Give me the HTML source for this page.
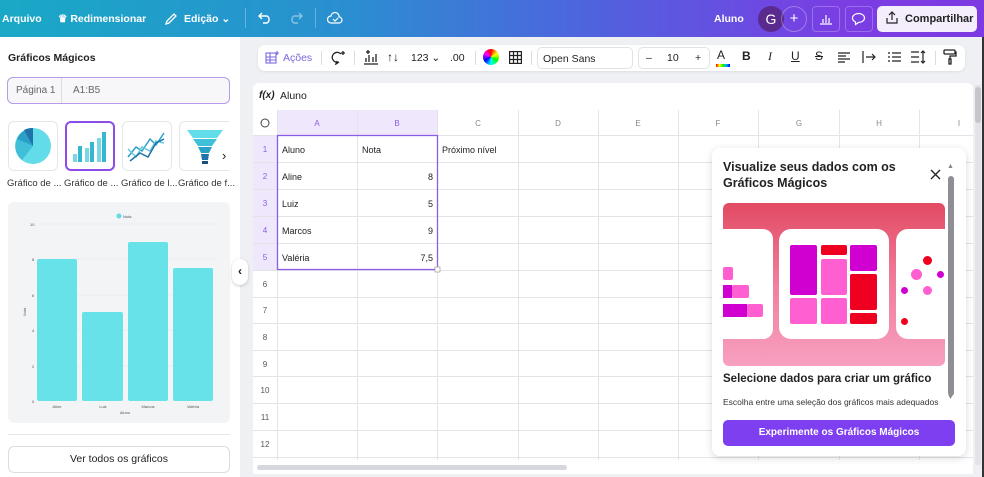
<!DOCTYPE html>
<html><head><meta charset="utf-8"><style>
*{box-sizing:border-box;margin:0;padding:0}
body{width:984px;height:477px;overflow:hidden;font-family:"Liberation Sans",sans-serif;background:#eef0f4;position:relative;font-size:11px;color:#222}
.a{position:absolute}
#top{left:0;top:0;width:984px;height:37px;background:linear-gradient(90deg,#19a9c6 0%,#2a8fd0 35%,#4f63de 60%,#7a3ee3 85%,#7d3ae2 100%);color:#fff;font-weight:bold;font-size:10.5px}
#top .a{top:13px}
#left{left:0;top:37px;width:240px;height:440px;background:#fff}
</style></head><body>
<div id="top" class="a">
 <div class="a" style="left:2px">Arquivo</div>
 <div class="a" style="left:58px">♛ Redimensionar</div>
 <svg class="a" style="left:164px;top:12px" width="14" height="14" viewBox="0 0 14 14" fill="none" stroke="#fff" stroke-width="1.3"><path d="M2 12l1-3 7-7 2 2-7 7z"/></svg>
 <div class="a" style="left:184px">Edição ⌄</div>
 <div class="a" style="left:245px;top:8px;width:1px;height:20px;background:rgba(255,255,255,.3)"></div>
 <svg class="a" style="left:258px;top:12px" width="14" height="12" viewBox="0 0 14 12" fill="none" stroke="#fff" stroke-width="1.4"><path d="M4 1L1 4l3 3M1 4h8a4 4 0 010 7H5"/></svg>
 <svg class="a" style="left:289px;top:12px" width="14" height="12" viewBox="0 0 14 12" fill="none" stroke="rgba(255,255,255,.45)" stroke-width="1.4"><path d="M10 1l3 3-3 3M13 4H5a4 4 0 000 7h4"/></svg>
 <div class="a" style="left:315px;top:8px;width:1px;height:20px;background:rgba(255,255,255,.3)"></div>
 <svg class="a" style="left:327px;top:12px" width="16" height="12" viewBox="0 0 16 12" fill="none" stroke="#fff" stroke-width="1.2"><path d="M4 11h8a3 3 0 000-6 4 4 0 00-8-1A3.5 3.5 0 004 11z M6 7l2 2 3-3"/></svg>
 <div class="a" style="left:714px">Aluno</div>
 <div class="a" style="left:758px;top:6px;width:26px;height:26px;border-radius:13px;background:#5a2a8f;color:#fff;font-weight:normal;font-size:14px;text-align:center;line-height:26px">G</div>
 <div class="a" style="left:781px;top:6px;width:26px;height:26px;border-radius:13px;border:1px solid rgba(255,255,255,.3);text-align:center;line-height:24px;font-size:15px;font-weight:normal">+</div>
 <div class="a" style="left:812px;top:6px;width:28px;height:26px;border-radius:4px;border:1px solid rgba(255,255,255,.25)"></div>
 <svg class="a" style="left:819px;top:13px" width="14" height="12" viewBox="0 0 14 12" stroke="#fff" stroke-width="1.2"><path d="M1 11h12M4 10V6M7 10V2M10 10V5"/></svg>
 <div class="a" style="left:845px;top:6px;width:28px;height:26px;border-radius:4px;border:1px solid rgba(255,255,255,.25)"></div>
 <svg class="a" style="left:851px;top:12px" width="15" height="14" viewBox="0 0 15 14" fill="none" stroke="#fff" stroke-width="1.2"><path d="M7.5 1.5c3.3 0 6 2 6 4.5s-2.7 4.5-6 4.5l-3 2v-2.5c-1.8-.8-3-2.3-3-4 0-2.5 2.7-4.5 6-4.5z"/></svg>
 <div class="a" style="left:877px;top:6px;width:100px;height:26px;border-radius:5px;background:#f4eefc;color:#222;font-size:11px;line-height:26px;padding-left:28px">Compartilhar</div>
 <svg class="a" style="left:885px;top:11px" width="14" height="14" viewBox="0 0 14 14" fill="none" stroke="#222" stroke-width="1.2"><path d="M7 9V1M4 4l3-3 3 3M2 7v5h10V7"/></svg>
</div>
<div id="left" class="a">
 <div class="a" style="left:8px;top:15px;font-weight:bold;font-size:10.5px">Gráficos Mágicos</div>
 <div class="a" style="left:7px;top:40px;width:223px;height:27px;border:1px solid #b79ae8;border-radius:6px;background:#f7f7f9"></div>
 <div class="a" style="left:16px;top:48px;color:#666;font-size:10px">Página 1</div>
 <div class="a" style="left:61px;top:41px;width:1px;height:25px;background:#ddd"></div>
 <div class="a" style="left:73px;top:48px;color:#666;font-size:10px">A1:B5</div>
 <div class="a" style="left:8px;top:84px;width:50px;height:50px;border:1px solid #e6e6ea;border-radius:6px"></div>
 <svg class="a" style="left:14px;top:90px" width="38" height="38" viewBox="0 0 38 38"><circle cx="19" cy="19" r="18" fill="#62dce8"/><path d="M19 19L19 1A18 18 0 0 0 3 12z" fill="#2aa0c8"/><path d="M19 19L3 12A18 18 0 0 0 8 33z" fill="#3fbfd8"/><path d="M19 19L19 1A18 18 0 0 0 10 3z" fill="#2073a8"/></svg>
 <div class="a" style="left:65px;top:84px;width:50px;height:50px;border:2px solid #8b4ce8;border-radius:6px"></div>
 <svg class="a" style="left:72px;top:93px" width="36" height="34" viewBox="0 0 36 34" fill="#35b7d0"><rect x="1" y="24" width="4" height="8" fill="#7ad8e6"/><rect x="6" y="16" width="4" height="16"/><rect x="13" y="18" width="4" height="14" fill="#7ad8e6"/><rect x="18" y="12" width="4" height="20"/><rect x="25" y="8" width="4" height="24" fill="#7ad8e6"/><rect x="30" y="2" width="4" height="30"/></svg>
 <div class="a" style="left:122px;top:84px;width:50px;height:50px;border:1px solid #e6e6ea;border-radius:6px"></div>
 <svg class="a" style="left:126px;top:88px" width="42" height="42" viewBox="0 0 42 42" fill="none" stroke-width="1.5"><path d="M2 32l8-10 6 4 8-12 6 6 8-12" stroke="#2aa0c8"/><path d="M2 24l8 8 6-10 8 4 6-10 8 2" stroke="#62c8e0"/><path d="M4 36l10-8 8 4 8-14 8-4" stroke="#2073a8"/></svg>
 <div class="a" style="left:179px;top:84px;width:50px;height:50px;border:1px solid #e6e6ea;border-radius:6px 0 0 6px;border-right:none"></div>
 <svg class="a" style="left:186px;top:91px" width="38" height="38" viewBox="0 0 38 38"><path d="M1 2h36l-6 8H7z" fill="#62dce8"/><path d="M7 11h24l-5 7H12z" fill="#3fbfd8"/><path d="M12 19h14l-3 6h-8z" fill="#2aa0c8"/><path d="M15 26h8l-1 6h-6z" fill="#2073a8"/><rect x="16" y="33" width="6" height="3" fill="#1a4d80"/></svg>
 <div class="a" style="left:222px;top:111px;font-size:13px;color:#222">›</div>
 <div class="a" style="left:7px;top:141px;font-size:9.5px;color:#333">Gráfico de ...</div>
 <div class="a" style="left:64px;top:141px;font-size:9.5px;color:#333">Gráfico de ...</div>
 <div class="a" style="left:121px;top:141px;font-size:9.5px;color:#333">Gráfico de l...</div>
 <div class="a" style="left:178px;top:141px;font-size:9.5px;color:#333;white-space:nowrap">Gráfico de f...</div>
 <div class="a" style="left:8px;top:165px;width:222px;height:221px;background:#f3f4f6;border-radius:6px"></div>
 <svg class="a" style="left:8px;top:165px" width="222" height="221" viewBox="0 0 222 221" font-family="Liberation Sans" font-size="4">
  <circle cx="111" cy="14" r="2.5" fill="#62dce8"/><text x="115" y="16" fill="#555">Nota</text>
  <g stroke="#e2e4e8" stroke-width=".6"><line x1="32" y1="22" x2="206" y2="22"/><line x1="32" y1="57" x2="206" y2="57"/><line x1="32" y1="93" x2="206" y2="93"/><line x1="32" y1="128" x2="206" y2="128"/><line x1="32" y1="164" x2="206" y2="164"/></g>
  <g fill="#555"><text x="22" y="24">10</text><text x="24" y="59">8</text><text x="24" y="95">6</text><text x="24" y="130">4</text><text x="24" y="166">2</text><text x="24" y="201">0</text></g>
  <g fill="#67e2e8"><rect x="29" y="57" width="40" height="142" rx="2"/><rect x="74" y="110" width="41" height="89" rx="2"/><rect x="120" y="40" width="40" height="159" rx="2"/><rect x="165" y="66" width="40" height="133" rx="2"/></g>
  <g fill="#555" text-anchor="middle"><text x="49" y="206">Aline</text><text x="95" y="206">Luiz</text><text x="140" y="206">Marcos</text><text x="185" y="206">Valéria</text><text x="117" y="212">Aluno</text></g>
  <text x="18" y="110" fill="#555" transform="rotate(-90 18 110)" text-anchor="middle">Nota</text>
 </svg>
 <div class="a" style="left:8px;top:397px;width:222px;height:1px;background:#e6e6ea"></div>
 <div class="a" style="left:8px;top:409px;width:222px;height:27px;border:1px solid #dcdce2;border-radius:6px;text-align:center;line-height:25px;font-size:10.5px;color:#222">Ver todos os gráficos</div>
</div>
<div class="a" style="left:232px;top:259px;width:16px;height:26px;border-radius:8px;background:#fff;box-shadow:0 1px 3px rgba(0,0,0,.2);text-align:center;line-height:24px;font-size:12px;font-weight:bold">‹</div>
<div class="a" style="left:258px;top:45px;width:707px;height:26px;background:#fff;border-radius:7px;box-shadow:0 1px 3px rgba(0,0,0,.08)"></div>
<svg class="a" style="left:265px;top:50px" width="15" height="15" viewBox="0 0 15 15" fill="none" stroke="#7d66e0" stroke-width="1.1"><rect x="1" y="3" width="10" height="10"/><path d="M1 7h10M1 10h10M5 3v10M12 1v4M10 3h4"/></svg>
<div class="a" style="left:283px;top:52px;color:#7d66e0;font-size:10.5px">Ações</div>
<div class="a" style="left:321px;top:51px;width:1px;height:14px;background:#ddd"></div>
<svg class="a" style="left:330px;top:50px" width="16" height="15" viewBox="0 0 16 15" fill="none" stroke="#222" stroke-width="1.3"><path d="M11 4a5 5 0 10-2 8l-3 2 1-3"/><path d="M13 1v4M11 3h4"/></svg>
<div class="a" style="left:354px;top:51px;width:1px;height:14px;background:#ddd"></div>
<svg class="a" style="left:363px;top:49px" width="16" height="16" viewBox="0 0 16 16" fill="none" stroke="#222" stroke-width="1.3"><path d="M1 15h14M3 13V9M6 13V6M10 13V8M13 13V5M5 1v4M3 3h4"/></svg>
<div class="a" style="left:387px;top:50px;font-size:12px">↑↓</div>
<div class="a" style="left:411px;top:52px;font-size:10.5px">123 ⌄</div>
<div class="a" style="left:450px;top:52px;font-size:10.5px">.00</div>
<div class="a" style="left:475px;top:51px;width:1px;height:14px;background:#ddd"></div>
<div class="a" style="left:483px;top:49px;width:16px;height:16px;border-radius:8px;background:conic-gradient(red,#ff0,#0f0,#0ff,#00f,#f0f,red)"></div>
<svg class="a" style="left:509px;top:51px" width="13" height="13" viewBox="0 0 13 13" fill="none" stroke="#222" stroke-width="1.2"><rect x=".6" y=".6" width="11.8" height="11.8"/><path d="M4.5 1v11M8.5 1v11M1 4.5h11M1 8.5h11"/></svg>
<div class="a" style="left:531px;top:51px;width:1px;height:14px;background:#ddd"></div>
<div class="a" style="left:537px;top:47px;width:96px;height:22px;border:1px solid #e2e2e6;border-radius:5px;padding:5px 0 0 5px;font-size:10.5px">Open Sans</div>
<div class="a" style="left:638px;top:47px;width:72px;height:22px;border:1px solid #e2e2e6;border-radius:5px;font-size:10.5px"><span class="a" style="left:7px;top:4px">–</span><span class="a" style="left:28px;top:4px">10</span><span class="a" style="left:56px;top:4px">+</span></div>
<div class="a" style="left:717px;top:48px;font-size:12px">A</div>
<div class="a" style="left:716px;top:64px;width:14px;height:3px;background:linear-gradient(90deg,red,#ff0,#0f0,#0af,#00f)"></div>
<div class="a" style="left:742px;top:49px;font-size:12px;font-weight:bold">B</div>
<div class="a" style="left:768px;top:49px;font-size:12px;font-style:italic;font-family:'Liberation Serif',serif">I</div>
<div class="a" style="left:791px;top:49px;font-size:12px;text-decoration:underline">U</div>
<div class="a" style="left:815px;top:49px;font-size:12px;text-decoration:line-through">S</div>
<svg class="a" style="left:838px;top:51px" width="12" height="12" viewBox="0 0 12 12" stroke="#222" stroke-width="1.2"><path d="M0 2h12M0 5h8M0 8h12M0 11h7"/></svg>
<svg class="a" style="left:862px;top:50px" width="15" height="14" viewBox="0 0 15 14" fill="none" stroke="#222" stroke-width="1.2"><path d="M1 1v12M4 7h9M10 4l3 3-3 3"/></svg>
<svg class="a" style="left:888px;top:51px" width="13" height="12" viewBox="0 0 13 12" stroke="#222" stroke-width="1.2"><path d="M0 2h2M0 6h2M0 10h2M4 2h9M4 6h9M4 10h9"/></svg>
<svg class="a" style="left:911px;top:50px" width="15" height="14" viewBox="0 0 15 14" fill="none" stroke="#222" stroke-width="1.2"><path d="M0 2h8M0 7h8M0 12h8M12 1v12M10 3l2-2 2 2M10 11l2 2 2-2"/></svg>
<div class="a" style="left:935px;top:51px;width:1px;height:14px;background:#ddd"></div>
<svg class="a" style="left:943px;top:49px" width="14" height="16" viewBox="0 0 14 16" fill="none" stroke="#222" stroke-width="1.3"><rect x="1" y="1" width="11" height="4" rx="1"/><path d="M12 3h1v4H7v3M6 10h2v5H6z"/></svg>
<div class="a" style="left:253px;top:83px;width:720px;height:391px;background:#fff;border-radius:6px 6px 0 0"></div>
<div class="a" style="left:259px;top:90px;font-style:italic;font-weight:bold;font-size:10px">f(x)</div>
<div class="a" style="left:280px;top:90px;font-size:10.5px">Aluno</div>
<div class="a" style="left:253px;top:110px;width:720px;height:350px;overflow:hidden">
 <div class="a" style="left:24px;top:0;width:160px;height:25px;background:#efe8fc"></div>
 <div class="a" style="left:0;top:25px;width:24px;height:135px;background:#efe8fc"></div>
 <svg class="a" style="left:0;top:0" width="720" height="350">
  <g stroke="#e4e4e8" stroke-width="1">
   <line x1="0" y1="25.5" x2="720" y2="25.5"/>
   <line x1="0" y1="52.5" x2="720" y2="52.5"/><line x1="0" y1="79.5" x2="720" y2="79.5"/><line x1="0" y1="106.5" x2="720" y2="106.5"/><line x1="0" y1="133.5" x2="720" y2="133.5"/><line x1="0" y1="160.5" x2="720" y2="160.5"/><line x1="0" y1="187.5" x2="720" y2="187.5"/><line x1="0" y1="213.5" x2="720" y2="213.5"/><line x1="0" y1="240.5" x2="720" y2="240.5"/><line x1="0" y1="266.5" x2="720" y2="266.5"/><line x1="0" y1="293.5" x2="720" y2="293.5"/><line x1="0" y1="320.5" x2="720" y2="320.5"/><line x1="0" y1="347.5" x2="720" y2="347.5"/>
   <line x1="24.5" y1="0" x2="24.5" y2="350"/><line x1="104.5" y1="0" x2="104.5" y2="350"/><line x1="184.5" y1="0" x2="184.5" y2="350"/><line x1="265.5" y1="0" x2="265.5" y2="350"/><line x1="345.5" y1="0" x2="345.5" y2="350"/><line x1="425.5" y1="0" x2="425.5" y2="350"/><line x1="505.5" y1="0" x2="505.5" y2="350"/><line x1="586.5" y1="0" x2="586.5" y2="350"/><line x1="666.5" y1="0" x2="666.5" y2="350"/>
  </g>
  <rect x="24.5" y="25.5" width="160" height="134" fill="none" stroke="#8b5ce6" stroke-width="1.3"/>
  <rect x="182" y="157" width="5" height="5" fill="#fff" stroke="#999" stroke-width=".7"/>
  <circle cx="12" cy="13" r="4" fill="none" stroke="#444" stroke-width="1"/>
  <g font-family="Liberation Sans" font-size="8" text-anchor="middle" fill="#888">
   <text x="64" y="16" fill="#8b5ce6">A</text><text x="144" y="16" fill="#8b5ce6">B</text><text x="225" y="16">C</text><text x="305" y="16">D</text><text x="385" y="16">E</text><text x="465" y="16">F</text><text x="546" y="16">G</text><text x="626" y="16">H</text><text x="706" y="16">I</text>
   <g fill="#8b5ce6"><text x="12" y="42">1</text><text x="12" y="69">2</text><text x="12" y="96">3</text><text x="12" y="123">4</text><text x="12" y="150">5</text></g>
   <g fill="#555"><text x="12" y="177">6</text><text x="12" y="203">7</text><text x="12" y="230">8</text><text x="12" y="257">9</text><text x="12" y="283">10</text><text x="12" y="310">11</text><text x="12" y="337">12</text></g>
  </g>
  <g font-family="Liberation Sans" font-size="9" fill="#222">
   <text x="29" y="43">Aluno</text><text x="109" y="43">Nota</text><text x="189" y="43">Próximo nível</text>
   <text x="29" y="70">Aline</text><text x="29" y="97">Luiz</text><text x="29" y="124">Marcos</text><text x="29" y="151">Valéria</text>
   <g text-anchor="end"><text x="180" y="70">8</text><text x="180" y="97">5</text><text x="180" y="124">9</text><text x="180" y="151">7,5</text></g>
  </g>
 </svg>
</div>
<div class="a" style="left:257px;top:465px;width:310px;height:5px;border-radius:3px;background:#d6d8de"></div>
<div class="a" style="left:975px;top:85px;width:6px;height:380px;background:#e4e4e8"></div>
<div class="a" style="left:975px;top:87px;width:6px;height:36px;border-radius:3px;background:#c4c6cc"></div>
<div class="a" style="left:982px;top:37px;width:2px;height:440px;background:#333"></div>
<div class="a" style="left:712px;top:148px;width:254px;height:308px;background:#fff;border-radius:8px;box-shadow:0 2px 8px rgba(0,0,0,.15)">
 <div class="a" style="left:11px;top:11px;font-weight:bold;font-size:12.5px;line-height:16px;width:190px">Visualize seus dados com os Gráficos Mágicos</div>
 <svg class="a" style="left:218px;top:21px" width="11" height="11" viewBox="0 0 11 11" stroke="#222" stroke-width="1.3"><path d="M1 1l9 9M10 1l-9 9"/></svg>
 <div class="a" style="left:236px;top:28px;width:6px;height:220px;background:#8e8e94;border-radius:3px"></div>
 <div class="a" style="left:235px;top:15px;font-size:7px;color:#888">▲</div>
 <div class="a" style="left:235px;top:246px;font-size:7px;color:#888">▼</div>
 <div class="a" style="left:11px;top:55px;width:222px;height:163px;border-radius:6px;overflow:hidden;background:linear-gradient(180deg,#e24a62 0%,#f07a98 45%,#f7a0c0 100%)">
  <div class="a" style="left:-20px;top:26px;width:70px;height:110px;background:#fff;border-radius:10px"></div>
  <div class="a" style="left:0;top:64px;width:10px;height:13px;background:#ff5fd0;border-radius:2px"></div>
  <div class="a" style="left:0;top:82px;width:9px;height:13px;background:#d000d0"></div>
  <div class="a" style="left:9px;top:82px;width:17px;height:13px;background:#ff5fd0;border-radius:2px"></div>
  <div class="a" style="left:0;top:101px;width:24px;height:13px;background:#d000d0"></div>
  <div class="a" style="left:24px;top:101px;width:16px;height:13px;background:#ff5fd0;border-radius:2px"></div>
  <div class="a" style="left:56px;top:26px;width:110px;height:110px;background:#fff;border-radius:12px"></div>
  <div class="a" style="left:67px;top:42px;width:27px;height:50px;background:#d000d0;border-radius:2px"></div>
  <div class="a" style="left:67px;top:95px;width:27px;height:26px;background:#ff5fd0;border-radius:2px"></div>
  <div class="a" style="left:98px;top:42px;width:26px;height:10px;background:#f00020;border-radius:2px"></div>
  <div class="a" style="left:98px;top:56px;width:26px;height:36px;background:#ff5fd0;border-radius:2px"></div>
  <div class="a" style="left:98px;top:95px;width:26px;height:26px;background:#ff5fd0;border-radius:2px"></div>
  <div class="a" style="left:127px;top:42px;width:27px;height:26px;background:#d000d0;border-radius:2px"></div>
  <div class="a" style="left:127px;top:71px;width:27px;height:36px;background:#f00020;border-radius:2px"></div>
  <div class="a" style="left:127px;top:110px;width:27px;height:11px;background:#f00020;border-radius:2px"></div>
  <div class="a" style="left:173px;top:26px;width:70px;height:110px;background:#fff;border-radius:12px"></div>
  <div class="a" style="left:200px;top:53px;width:9px;height:9px;border-radius:5px;background:#f00020"></div>
  <div class="a" style="left:188px;top:66px;width:11px;height:11px;border-radius:6px;background:#ff5fd0"></div>
  <div class="a" style="left:214px;top:68px;width:7px;height:7px;border-radius:4px;background:#d000d0"></div>
  <div class="a" style="left:178px;top:84px;width:7px;height:7px;border-radius:4px;background:#d000d0"></div>
  <div class="a" style="left:200px;top:83px;width:9px;height:9px;border-radius:5px;background:#ff5fd0"></div>
  <div class="a" style="left:178px;top:115px;width:7px;height:7px;border-radius:4px;background:#f00020"></div>
 </div>
 <div class="a" style="left:11px;top:225px;font-weight:bold;font-size:11.5px">Selecione dados para criar um gráfico</div>
 <div class="a" style="left:11px;top:249px;font-size:8.5px;color:#333">Escolha entre uma seleção dos gráficos mais adequados</div>
 <div class="a" style="left:11px;top:272px;width:232px;height:26px;border-radius:5px;background:#7d3ff0;color:#fff;font-weight:bold;font-size:10px;text-align:center;line-height:26px">Experimente os Gráficos Mágicos</div>
</div>
</body></html>
